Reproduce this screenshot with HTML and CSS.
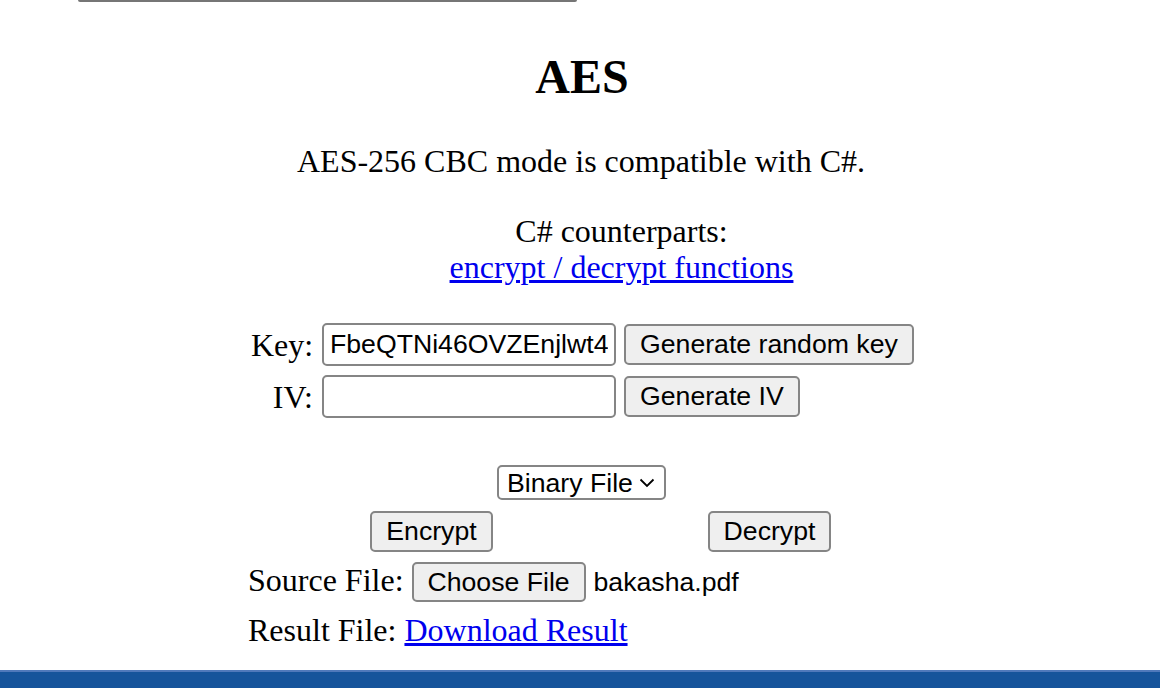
FILE: index.html
```html
<!DOCTYPE html>
<html lang="en">
<head>
<meta charset="utf-8">
<title>AES</title>
<link rel="stylesheet" href="styles.css">
</head>
<body>
<div class="topline"></div>
<main class="page">
  <h1 class="title">AES</h1>
  <p class="intro">AES-256 CBC mode is compatible with C#.</p>
  <p class="counter">C# counterparts:<br><a href="#" class="link">encrypt / decrypt functions</a></p>
  <div class="keys">
    <div class="keyrow">
      <span class="label">Key:</span>
      <input class="field" type="text" value="FbeQTNi46OVZEnjlwt4Xq">
      <button class="btn">Generate random key</button>
    </div>
    <div class="keyrow">
      <span class="label">IV:</span>
      <input class="field" type="text" value="">
      <button class="btn">Generate IV</button>
    </div>
  </div>
  <div class="modewrap">
    <select class="mode"><option>Binary File</option></select>
  </div>
  <div class="actions">
    <button class="btn btn-act">Encrypt</button>
    <button class="btn btn-act">Decrypt</button>
  </div>
  <div class="files">
    <div class="filerow">
      <span>Source File:</span>
      <button class="btn btn-file">Choose File</button>
      <span class="fname">bakasha.pdf</span>
    </div>
    <div class="filerow result">
      <span>Result File:</span>
      <a href="#" class="link">Download Result</a>
    </div>
  </div>
</main>
<footer class="bar"></footer>
</body>
</html>
```

FILE: styles.css
```css
html, body {
  margin: 0;
  padding: 0;
  background: #fff;
}
body {
  height: 688px;
  overflow: hidden;
  display: flex;
  flex-direction: column;
  font-family: "Liberation Serif", "Times New Roman", serif;
  font-size: 32px;
  line-height: 36px;
  color: #000;
}
.topline {
  width: 499px;
  height: 2px;
  margin-left: 78px;
  background: #767676;
  border-radius: 0 0 2px 2px;
  flex: none;
}
.page {
  flex: 1;
  width: 664px;
  margin: 0 auto;
  display: flex;
  flex-direction: column;
}
.title {
  margin: 47px 0 0;
  padding-left: 4px;
  font-size: 48px;
  line-height: 56px;
  font-weight: bold;
  text-align: center;
}
.intro {
  margin: 38px 0 0;
  padding-left: 2px;
  text-align: center;
  white-space: nowrap;
}
.counter {
  margin: 34px 0 0;
  padding-left: 83px;
  text-align: center;
}
.link {
  color: #0000ee;
  text-decoration: underline;
}
.keys {
  margin-top: 38px;
  display: flex;
  flex-direction: column;
  gap: 9px;
  align-items: flex-start;
  padding-left: 3px;
}
.keyrow {
  display: flex;
  align-items: center;
  height: 43px;
}
.label {
  width: 62px;
  text-align: right;
  margin-right: 9px;
}
.field {
  box-sizing: border-box;
  width: 294px;
  height: 43px;
  margin: 0 8px 0 0;
  padding: 0 6px;
  border: 2px solid #858585;
  border-radius: 5px;
  background: #fff;
  font-family: "Liberation Sans", Arial, sans-serif;
  font-size: 26.67px;
  color: #000;
}
.btn {
  box-sizing: border-box;
  height: 41px;
  margin: 0;
  padding: 0 14px;
  border: 2px solid #858585;
  border-radius: 5px;
  background: #efefef;
  font-family: "Liberation Sans", Arial, sans-serif;
  font-size: 26.67px;
  color: #000;
  line-height: 1;
  white-space: nowrap;
}
.modewrap {
  margin-top: 47px;
  display: flex;
  justify-content: center;
  padding-left: 3px;
}
.mode {
  appearance: none;
  -webkit-appearance: none;
  box-sizing: border-box;
  width: 169px;
  height: 35px;
  margin: 0;
  padding: 0 0 0 8px;
  border: 2px solid #858585;
  border-radius: 5px;
  background: #fff url("data:image/svg+xml;utf8,<svg xmlns='http://www.w3.org/2000/svg' width='16' height='10' viewBox='0 0 16 10'><path d='M1.5 1.5 L8 8 L14.5 1.5' fill='none' stroke='black' stroke-width='1.8'/></svg>") no-repeat right 9px center;
  font-family: "Liberation Sans", Arial, sans-serif;
  font-size: 26.67px;
  color: #000;
}
.actions {
  margin-top: 11px;
  display: flex;
  justify-content: center;
  gap: 215px;
  padding-left: 41px;
}
.btn-act {
  width: 123px;
  padding: 0;
}
.files {
  margin-top: 10px;
  display: flex;
  flex-direction: column;
}
.filerow {
  display: flex;
  align-items: baseline;
  gap: 8px;
}
.btn-file {
  height: 40px;
  width: 174px;
  padding: 0;
}
.fname {
  font-family: "Liberation Sans", Arial, sans-serif;
  font-size: 26.67px;
}
.result {
  margin-top: 10px;
  gap: 8px;
}
.bar {
  flex: none;
  height: 16px;
  background: #16549b;
  border-top: 2px solid #5079bb;
}
```
